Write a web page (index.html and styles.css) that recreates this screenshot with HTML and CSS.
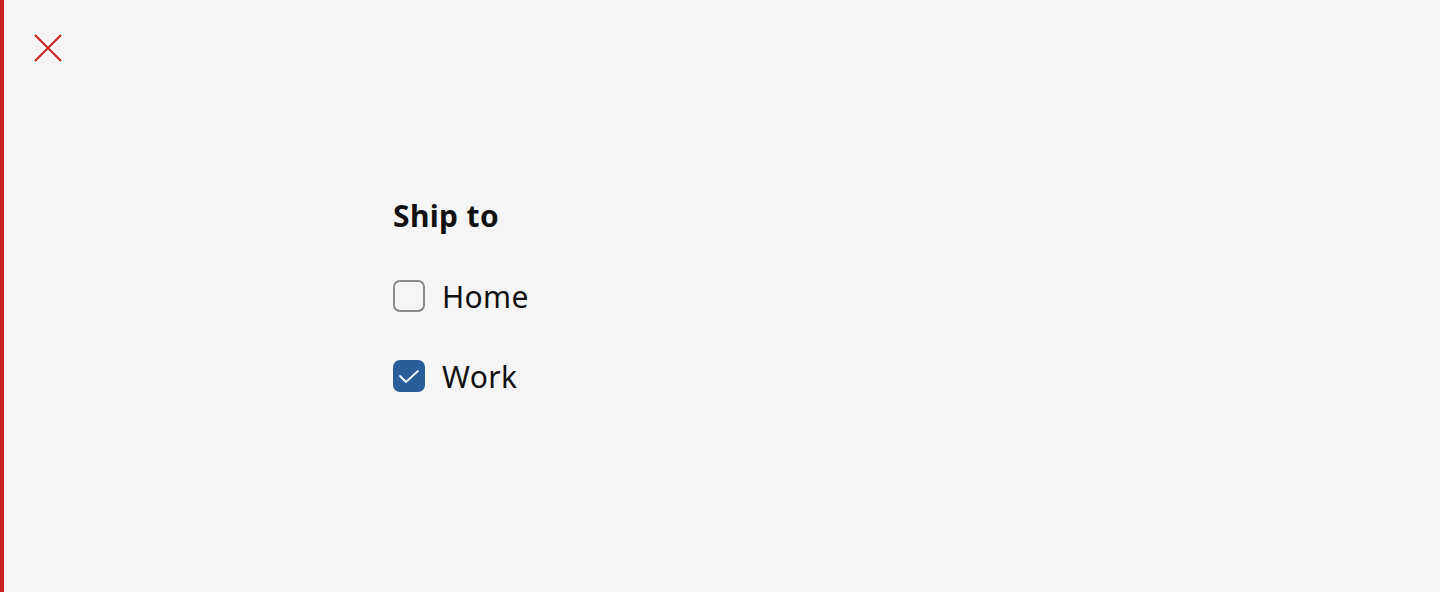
FILE: index.html
```html
<!DOCTYPE html>
<html lang="en">
<head>
<meta charset="utf-8">
<title>Ship to</title>
<link rel="stylesheet" href="styles.css">
</head>
<body>
<div class="page">
  <button class="close" aria-label="Close">
    <svg width="28" height="28" viewBox="0 0 28 28"><path d="M1 1 L27 27 M27 1 L1 27" stroke="#c8201f" stroke-width="2" fill="none"/></svg>
  </button>
  <main class="content">
    <fieldset class="group">
      <legend class="title">Ship to</legend>
      <label class="option">
        <span class="box"></span>
        <span class="label">Home</span>
      </label>
      <label class="option">
        <span class="box checked">
          <svg width="22" height="15" viewBox="0 0 22 15"><path d="M2 7 L8 13 L20 2" stroke="#fff" stroke-width="1.8" fill="none" stroke-linecap="round" stroke-linejoin="round"/></svg>
        </span>
        <span class="label">Work</span>
      </label>
    </fieldset>
  </main>
</div>
</body>
</html>
```

FILE: styles.css
```css
html, body {
  margin: 0;
  padding: 0;
  height: 100%;
}
body {
  background: #f5f5f5;
  font-family: "Noto Sans", "Lato", sans-serif;
  color: #111;
}
.page {
  min-height: 592px;
  border-left: 4px solid #c8201f;
  box-sizing: border-box;
  padding: 34px 0 0 30px;
}
.close {
  display: block;
  background: none;
  border: 0;
  padding: 0;
  width: 28px;
  height: 28px;
  cursor: pointer;
}
.content {
  padding: 136px 0 0 359px;
}
.group {
  border: 0;
  margin: 0;
  padding: 0;
}
.title {
  padding: 0;
  font-size: 30px;
  font-weight: 700;
  letter-spacing: 0.35px;
  line-height: 36px;
  margin-bottom: 38px;
}
.option {
  display: flex;
  align-items: center;
  gap: 17px;
  height: 48px;
  margin-bottom: 32px;
  font-size: 30px;
  letter-spacing: 0.35px;
}
.box {
  width: 28px;
  height: 28px;
  border: 2px solid #8a8a8a;
  border-radius: 7px;
  box-sizing: content-box;
  display: flex;
  align-items: center;
  justify-content: center;
}
.box.checked {
  background: #2b5d9b;
  border-color: #2b5d9b;
}
.label {
  line-height: 36px;
  padding-top: 2px;
}
```
